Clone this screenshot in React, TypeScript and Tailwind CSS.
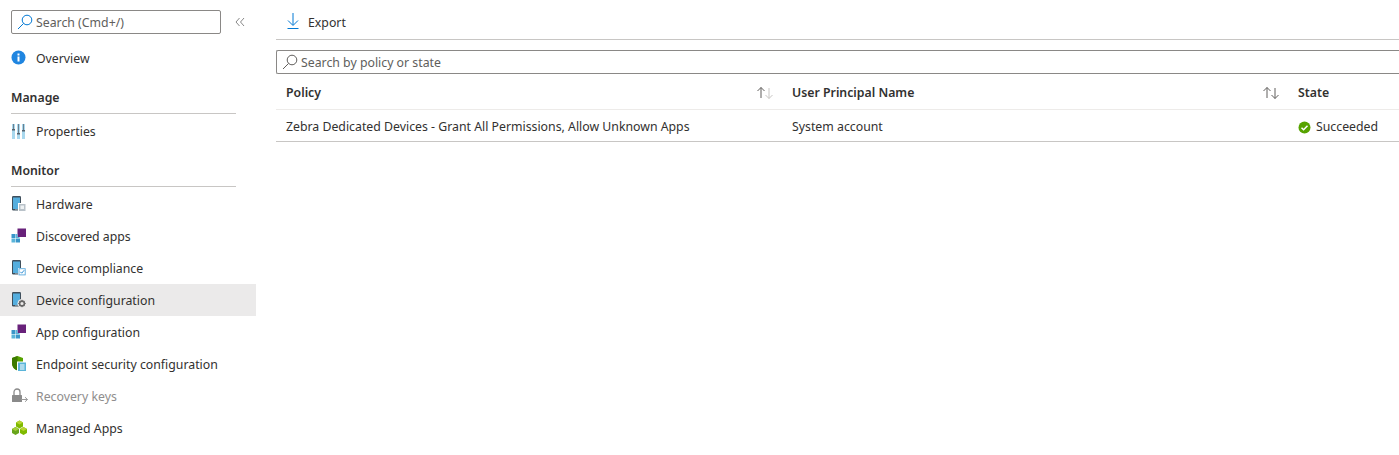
import React from "react";

const Phone = ({ badge }: { badge: React.ReactNode }) => (
  <svg width="16" height="16" viewBox="0 0 16 16">
    <rect x="1" y="0" width="9" height="14.500" rx="1.200" fill="#3f4f5c" />
    <rect x="2" y="1.500" width="7" height="11.500" fill="#55aede" />
    <rect x="4" y="13.300" width="3" height="1" fill="#9aa5ad" />
    {badge}
  </svg>
);

const Apps = () => (
  <svg width="16" height="16" viewBox="0 0 16 16">
    <rect x="6.500" y="0.500" width="8.500" height="8.500" fill="#68217a" />
    <rect x="0.500" y="6" width="4" height="4" fill="#3a96c9" />
    <rect x="5" y="6" width="1.500" height="3" fill="#59b4d9" />
    <rect x="5" y="9" width="3.500" height="1" fill="#59b4d9" />
    <rect x="0.500" y="10.500" width="4" height="4" fill="#59b4d9" />
    <rect x="5" y="10.500" width="4" height="4" fill="#3a96c9" />
  </svg>
);

const icons: Record<string, React.ReactNode> = {
  overview: (
    <svg width="16" height="16" viewBox="0 0 16 16">
      <circle cx="7.500" cy="7.500" r="7" fill="#1f85e0" />
      <rect x="6.500" y="6.500" width="2" height="5" fill="#fff" />
      <rect x="6.500" y="3.500" width="2" height="2" fill="#fff" />
    </svg>
  ),
  properties: (
    <svg width="16" height="17" viewBox="0 0 16 17">
      <rect x="1" y="1" width="3" height="15" fill="#a9d8ee" />
      <rect x="6" y="1" width="3" height="15" fill="#a9d8ee" />
      <rect x="11" y="1" width="3" height="15" fill="#a9d8ee" />
      <rect x="2" y="1" width="1" height="5" fill="#6d7f8c" />
      <rect x="7" y="1" width="1" height="10" fill="#6d7f8c" />
      <rect x="12" y="1" width="1" height="6" fill="#6d7f8c" />
      <rect x="1" y="6" width="3" height="1.500" fill="#55636e" />
      <rect x="6" y="10" width="3" height="1.500" fill="#55636e" />
      <rect x="11" y="7" width="3" height="1.500" fill="#55636e" />
    </svg>
  ),
  hardware: (
    <Phone
      badge={
        <g>
          <rect x="7" y="7" width="8" height="8.500" fill="#fff" />
          <rect x="8" y="8" width="6.500" height="7" fill="#b9c2c9" />
          <rect x="9.500" y="9.500" width="3.500" height="3.500" fill="#eef1f3" />
        </g>
      }
    />
  ),
  compliance: (
    <Phone
      badge={
        <g>
          <rect x="7" y="8" width="8" height="7.500" fill="#fff" />
          <rect x="8" y="8.700" width="6.200" height="6.200" fill="#fff" stroke="#59a8dc" strokeWidth="0.900" />
          <path d="M9.300 11.800l1.400 1.400 2.500-3" fill="none" stroke="#2f8fd6" strokeWidth="1" />
        </g>
      }
    />
  ),
  config: (
    <Phone
      badge={
        <g>
          <circle cx="11" cy="11.500" r="4.500" fill="#ebeaea" />
          <circle cx="11" cy="11.500" r="2.400" fill="none" stroke="#666" strokeWidth="1.600" />
          <path d="M11 7.800v1.400M11 13.800v1.400M7.300 11.500h1.400M13.300 11.500h1.400M8.400 8.900l1 1M12.600 13.100l1 1M8.400 14.100l1-1M12.600 9.900l1-1" stroke="#666" strokeWidth="1" />
        </g>
      }
    />
  ),
  apps: <Apps />,
  security: (
    <svg width="16" height="16" viewBox="0 0 16 16">
      <path d="M6.500 0L12 2V7c0 4-2.500 6.500-5.500 7.500C3.500 13.500 1 11 1 7V2z" fill="#57a300" />
      <path d="M6.500 0V14.500C3.500 13.500 1 11 1 7V2z" fill="#3d7a00" />
      <rect x="6" y="5.500" width="9.500" height="10" fill="#fff" />
      <rect x="7" y="6.500" width="8" height="8.500" fill="#59b4d9" />
      <rect x="9" y="8.500" width="4.500" height="1" fill="#fff" />
      <rect x="9" y="10.500" width="4.500" height="1" fill="#fff" />
      <rect x="9" y="12.500" width="4.500" height="1" fill="#fff" />
    </svg>
  ),
  recovery: (
    <svg width="17" height="16" viewBox="0 0 17 16">
      <path d="M3 7V4a3 3 0 016 0V7" fill="none" stroke="#8a8a8a" strokeWidth="1.300" />
      <rect x="1" y="7" width="10" height="7" rx="0.500" fill="#8a8a8a" />
      <path d="M10 11.500h6.500M14 9.200l2.500 2.300-2.500 2.300" fill="none" stroke="#9a9a9a" strokeWidth="1" />
    </svg>
  ),
  managed: (
    <svg width="17" height="16" viewBox="0 0 17 16">
      <path d="M8.500 0.500l3.500 2v4l-3.500 2-3.500-2v-4z" fill="#7fba00" />
      <path d="M8.500 0.500l3.500 2-3.500 2-3.500-2z" fill="#b8d432" />
      <path d="M4.500 7l3.500 2v4l-3.500 2-3.500-2V9z" fill="#68a51c" />
      <path d="M4.500 7l3.500 2-3.500 2L1 9z" fill="#a5ce39" />
      <path d="M12.500 7l3.500 2v4l-3.500 2L9 13V9z" fill="#7fba00" />
      <path d="M12.500 7l3.500 2-3.500 2L9 9z" fill="#b8d432" />
    </svg>
  ),
};

const Item = ({ icon, label, active, muted }: { icon: string; label: string; active?: boolean; muted?: boolean }) => (
  <div className={`flex h-8 items-center pl-[11px] ${active ? "bg-[#ebeaea]" : ""}`}>
    <span className="flex w-[25px] shrink-0">{icons[icon]}</span>
    <span className={`pt-[2px] ${muted ? "text-[#8f8e8d]" : "text-[#323130]"}`}>{label}</span>
  </div>
);

const Section = ({ title }: { title: string }) => (
  <div className="mt-[7px] ml-[11px] mr-5 flex h-[33px] items-center border-b border-[#c8c6c4] pt-[2px] font-semibold text-[#323130]">
    {title}
  </div>
);

const Sort = ({ active }: { active?: boolean }) => (
  <svg width="18" height="14" viewBox="0 0 18 14" fill="none" strokeWidth="1">
    <path d="M5 12V1.500M1.500 5L5 1.500 8.500 5" stroke="#605e5c" />
    <path d="M13 2V12.500M9.500 9L13 12.500 16.500 9" stroke={active ? "#605e5c" : "#c8c6c4"} />
  </svg>
);

const Lens = ({ color }: { color: string }) => (
  <svg width="16" height="16" viewBox="0 0 16 16" fill="none" stroke={color} strokeWidth="1">
    <circle cx="10" cy="6" r="4.800" />
    <path d="M6.600 9.400L1 15" />
  </svg>
);

export default function App() {
  return (
    <div className="flex h-[455px] w-[1399px] overflow-hidden bg-white font-['Noto_Sans','Open_Sans',sans-serif] text-[12.3px] text-[#323130]">
      <aside className="w-[256px] shrink-0">
        <div className="flex h-[42px] items-start pt-[10px] pl-[11px]">
          <div className="flex h-6 w-[210px] items-center rounded-[2px] border border-[#8a8886] pl-[5px]">
            <Lens color="#0078d4" />
            <span className="ml-[3px] pt-[2px] text-[#605e5c]">Search (Cmd+/)</span>
          </div>
          <svg className="mt-[7px] ml-[14px]" width="10" height="10" viewBox="0 0 10 10" fill="none" stroke="#7a7a7a" strokeWidth="0.900">
            <path d="M4.500 1L1 5l3.500 4M9 1L5.500 5 9 9" />
          </svg>
        </div>
        <Item icon="overview" label="Overview" />
        <Section title="Manage" />
        <div className="h-[1px]" />
        <Item icon="properties" label="Properties" />
        <Section title="Monitor" />
        <div className="h-[1px]" />
        <Item icon="hardware" label="Hardware" />
        <Item icon="apps" label="Discovered apps" />
        <Item icon="compliance" label="Device compliance" />
        <Item icon="config" label="Device configuration" active />
        <Item icon="apps" label="App configuration" />
        <Item icon="security" label="Endpoint security configuration" />
        <Item icon="recovery" label="Recovery keys" muted />
        <Item icon="managed" label="Managed Apps" />
      </aside>
      <main className="ml-5 min-w-0 flex-1">
        <div className="flex h-10 items-center border-b border-[#c8c6c4] pt-[3px] pl-[9px]">
          <svg width="16" height="18" viewBox="0 0 16 18" fill="none" stroke="#0078d4" strokeWidth="1">
            <path d="M8 1v12M3 8.500L8 13.500l5-5" />
            <path d="M2.500 16.500h11" />
          </svg>
          <span className="ml-[7px] pt-[4px]">Export</span>
        </div>
        <div className="mt-[10px] flex h-6 items-center rounded-l-[2px] border border-r-0 border-[#8a8886] pl-[5px]">
          <Lens color="#605e5c" />
          <span className="ml-[3px] pt-[2px] text-[#605e5c]">Search by policy or state</span>
        </div>
        <div className="flex h-[36px] items-center border-b border-[#edebe9] pt-[3px] font-semibold">
          <div className="flex w-[506px] items-center pl-[10px] pr-[8px]">
            <span className="flex-1">Policy</span>
            <Sort />
          </div>
          <div className="flex w-[506px] items-center pl-[10px] pr-[8px]">
            <span className="flex-1">User Principal Name</span>
            <Sort active />
          </div>
          <div className="pl-[10px]">State</div>
        </div>
        <div className="flex h-[32px] items-center border-b border-[#c8c6c4] pt-[3px]">
          <div className="w-[506px] pl-[10px]">Zebra Dedicated Devices - Grant All Permissions, Allow Unknown Apps</div>
          <div className="w-[506px] pl-[10px]">System account</div>
          <div className="flex items-center pl-[10px]">
            <svg width="13" height="13" viewBox="0 0 13 13">
              <circle cx="6.500" cy="6.500" r="6" fill="#57a300" />
              <path d="M3.500 6.700l2.100 2.100 3.900-4" fill="none" stroke="#fff" strokeWidth="1.500" />
            </svg>
            <span className="ml-[5px]">Succeeded</span>
          </div>
        </div>
      </main>
    </div>
  );
}
